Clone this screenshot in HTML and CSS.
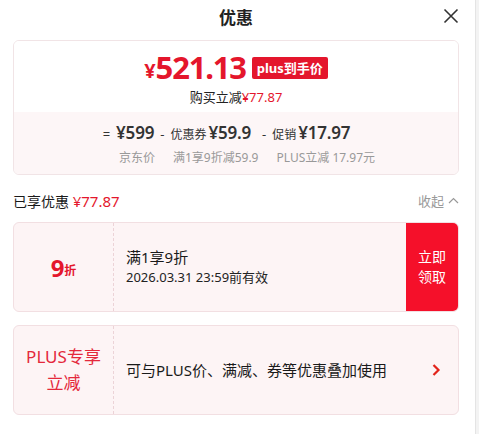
FILE: index.html
```html
<!DOCTYPE html>
<html lang="zh-CN">
  <head>
    <meta charset="UTF-8" />
    <meta name="viewport" content="width=device-width, initial-scale=1.0" />
    <title>优惠</title>
    <link rel="stylesheet" href="styles.css">
  </head>
  <body>
    <div class="panel">
      <div class="header">
        <h1>优惠</h1>
        <span class="close">
          <svg width="16" height="16" viewBox="0 0 16 16">
            <path d="M1.5 1.5 L14.5 14.5 M14.5 1.5 L1.5 14.5" stroke="#333" stroke-width="1.6" fill="none" />
          </svg>
        </span>
      </div>

      <div class="summary">
        <div class="summary-top">
          <div class="final">
            <span class="yen">¥</span><span class="amount">521.13</span>
            <span class="badge">plus到手价</span>
          </div>
          <div class="saved">购买立减<span class="red">¥77.87</span></div>
        </div>
        <div class="summary-bottom">
          <div class="calc">
            <span class="op">=</span>
            <span class="num">¥599</span>
            <span class="op">-</span>
            <span class="lbl">优惠券</span>
            <span class="num">¥59.9</span>
            <span class="op op-gap">-</span>
            <span class="lbl">促销</span>
            <span class="num">¥17.97</span>
          </div>
          <div class="calc-notes">
            <span>京东价</span>
            <span>满1享9折减59.9</span>
            <span>PLUS立减 17.97元</span>
          </div>
        </div>
      </div>

      <div class="enjoyed">
        <div>已享优惠 <span class="red">¥77.87</span></div>
        <div class="fold">收起
          <svg width="11" height="7" viewBox="0 0 11 7">
            <path d="M1 6 L5.5 1.5 L10 6" stroke="#999" stroke-width="1.2" fill="none" />
          </svg>
        </div>
      </div>

      <div class="coupon">
        <div class="coupon-left">
          <span class="big">9</span><span class="unit">折</span>
        </div>
        <div class="coupon-mid">
          <div class="c-title">满1享9折</div>
          <div class="c-date">2026.03.31 23:59前有效</div>
        </div>
        <button class="claim">立即<br />领取</button>
      </div>

      <div class="coupon">
        <div class="coupon-left plus">PLUS专享<br />立减</div>
        <div class="coupon-mid">
          <div class="c-title">可与PLUS价、满减、券等优惠叠加使用</div>
        </div>
        <div class="arrow">
          <svg width="10" height="14" viewBox="0 0 10 14">
            <path d="M2.5 2 L7.5 7 L2.5 12" stroke="#e2231a" stroke-width="2.2" fill="none" />
          </svg>
        </div>
      </div>
    </div>
  </body>
</html>
```

FILE: styles.css
```css
body {
  margin: 0;
  background: #f3f3f3;
  font-family: "Noto Sans", "Noto Sans CJK SC", sans-serif;
  color: #1a1a1a;
}

.panel {
  width: 446px;
  height: 434px;
  padding: 0 16px 0 13px;
  background: #fff;
  border-right: 1px solid #e4e4e4;
  overflow: hidden;
}

.header {
  height: 32px;
  display: flex;
  align-items: center;
  justify-content: center;
  position: relative;
  margin-bottom: 8px;
}

.header h1 {
  margin: 0;
  font-size: 17px;
  font-weight: bold;
  color: #222;
}

.close {
  position: absolute;
  right: 0;
  top: 8px;
  display: flex;
}

.red {
  color: #e4162c;
}

.summary {
  border: 1px solid #f1e4e6;
  border-radius: 6px;
  overflow: hidden;
}

.summary-top {
  height: 71px;
  background: #fff;
  display: flex;
  flex-direction: column;
  align-items: center;
}

.final {
  display: flex;
  align-items: center;
  height: 42px;
  margin-top: 5px;
  color: #e4162c;
}

.yen {
  font-size: 20px;
  font-weight: bold;
  margin-top: 6px;
}

.amount {
  font-size: 31px;
  font-weight: bold;
  letter-spacing: -1.2px;
  line-height: 1;
}

.badge {
  background: #e4162c;
  color: #fff;
  font-size: 13px;
  font-weight: bold;
  padding: 2px 5px;
  border-radius: 2px;
  margin-left: 6px;
  line-height: 18px;
  margin-top: 2px;
}

.saved {
  font-size: 13px;
  line-height: 18px;
  color: #222;
}

.summary-bottom {
  height: 62px;
  background: #fdf6f7;
  display: flex;
  flex-direction: column;
  align-items: center;
}

.calc {
  display: flex;
  align-items: baseline;
  gap: 5px;
  margin-top: 9px;
  margin-right: 20px;
  color: #333;
  height: 26px;
}

.calc .num {
  font-size: 17px;
  font-weight: 600;
  letter-spacing: -0.2px;
}

.calc .op {
  font-size: 13px;
  margin: 0 1px;
}

.calc .op-gap {
  margin-left: 6px;
}

.calc .lbl {
  font-size: 12px;
  margin-right: -3px;
}

.calc-notes {
  display: flex;
  gap: 18px;
  font-size: 12px;
  color: #999;
  margin-left: 22px;
  margin-top: 1px;
}

.enjoyed {
  display: flex;
  justify-content: space-between;
  align-items: center;
  height: 43px;
  padding-top: 4px;
  font-size: 14px;
}

.enjoyed .red {
  font-size: 15px;
}

.fold {
  color: #999;
  font-size: 13px;
  display: flex;
  align-items: center;
  gap: 4px;
}

.coupon {
  display: flex;
  height: 90px;
  border: 1px solid #f2dfe2;
  border-radius: 6px;
  background: #fdf4f5;
  overflow: hidden;
  box-sizing: border-box;
  margin-bottom: 13px;
}

.coupon-left {
  width: 99px;
  border-right: 1px dashed #ecd3d7;
  display: flex;
  align-items: center;
  justify-content: center;
  color: #e4162c;
}

.coupon-left .big {
  font-size: 24px;
  font-weight: bold;
}

.coupon-left .unit {
  font-size: 12px;
  font-weight: bold;
  margin-top: 6px;
}

.coupon-left.plus {
  text-align: center;
  font-size: 17px;
  line-height: 26px;
  color: #e4283b;
}

.coupon-mid {
  flex: 1;
  display: flex;
  flex-direction: column;
  justify-content: center;
  padding-left: 12px;
}

.c-title {
  font-size: 15px;
  line-height: 21px;
  color: #1a1a1a;
}

.c-date {
  font-size: 13px;
  line-height: 19px;
  color: #222;
}

.claim {
  width: 52px;
  border: none;
  background: #f5102a;
  color: #fff;
  font-family: inherit;
  font-size: 14px;
  line-height: 20px;
  padding: 0;
  cursor: pointer;
}

.arrow {
  width: 36px;
  display: flex;
  align-items: center;
  justify-content: center;
  padding-right: 4px;
}
```
